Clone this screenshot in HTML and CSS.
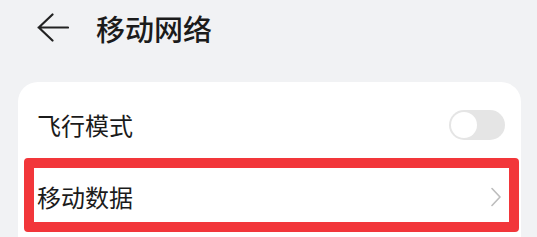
FILE: index.html
```html
<!DOCTYPE html>
<html lang="zh">
<head>
<meta charset="utf-8">
<link rel="stylesheet" href="styles.css">
</head>
<body>
<header class="top">
  <svg class="back" width="32" height="30" viewBox="0 0 32 30">
    <path d="M1.5 14.5 H31 M15.5 1.5 L1.8 14.5 L15.5 27.5" fill="none" stroke="#222" stroke-width="2.2" stroke-linecap="round" stroke-linejoin="round"/>
  </svg>
  <h1 class="title">移动网络</h1>
</header>
<section class="card">
  <div class="row">
    <span class="label">飞行模式</span>
    <span class="switch"><span class="knob"></span></span>
  </div>
  <div class="row row-hl">
    <span class="label">移动数据</span>
    <svg class="chev" width="10" height="20" viewBox="0 0 10 20">
      <path d="M1 1.5 L9 10 L1 18.5" fill="none" stroke="#bdbdbd" stroke-width="1.6" stroke-linecap="round" stroke-linejoin="round"/>
    </svg>
    <span class="highlight"></span>
  </div>
</section>
</body>
</html>
```
FILE: styles.css
```css
html, body {
  margin: 0;
  padding: 0;
  background: #f1f2f4;
  font-family: "Noto Sans CJK SC", "Noto Sans", sans-serif;
  color: #1b1b1b;
  overflow: hidden;
}
.top {
  height: 56px;
  display: flex;
  align-items: center;
  padding-left: 37px;
}
.back {
  display: block;
  flex: none;
}
.title {
  margin: 0 0 0 27px;
  font-size: 29px;
  font-weight: 500;
  line-height: 1;
  letter-spacing: 0;
}
.card {
  margin: 26px 16px 0 18px;
  background: #fff;
  border-radius: 20px 20px 0 0;
  padding-top: 7px;
  height: 155px;
  box-sizing: border-box;
}
.row {
  height: 72px;
  display: flex;
  align-items: center;
  justify-content: space-between;
  padding: 0 16px 0 19px;
}
.label {
  font-size: 24px;
  line-height: 1;
  color: #1b1b1b;
}
.switch {
  width: 56px;
  height: 30px;
  border-radius: 15px;
  background: #e5e5e5;
  display: flex;
  align-items: center;
  padding-left: 2px;
  box-sizing: border-box;
}
.knob {
  width: 26px;
  height: 26px;
  border-radius: 50%;
  background: #fff;
}
.row-hl {
  position: relative;
  padding-right: 20px;
}
.chev {
  display: block;
}
.highlight {
  position: absolute;
  left: 6px;
  right: 2px;
  top: -3px;
  bottom: 1px;
  border: 10px solid #f2363a;
  border-radius: 4px;
  pointer-events: none;
}
```
